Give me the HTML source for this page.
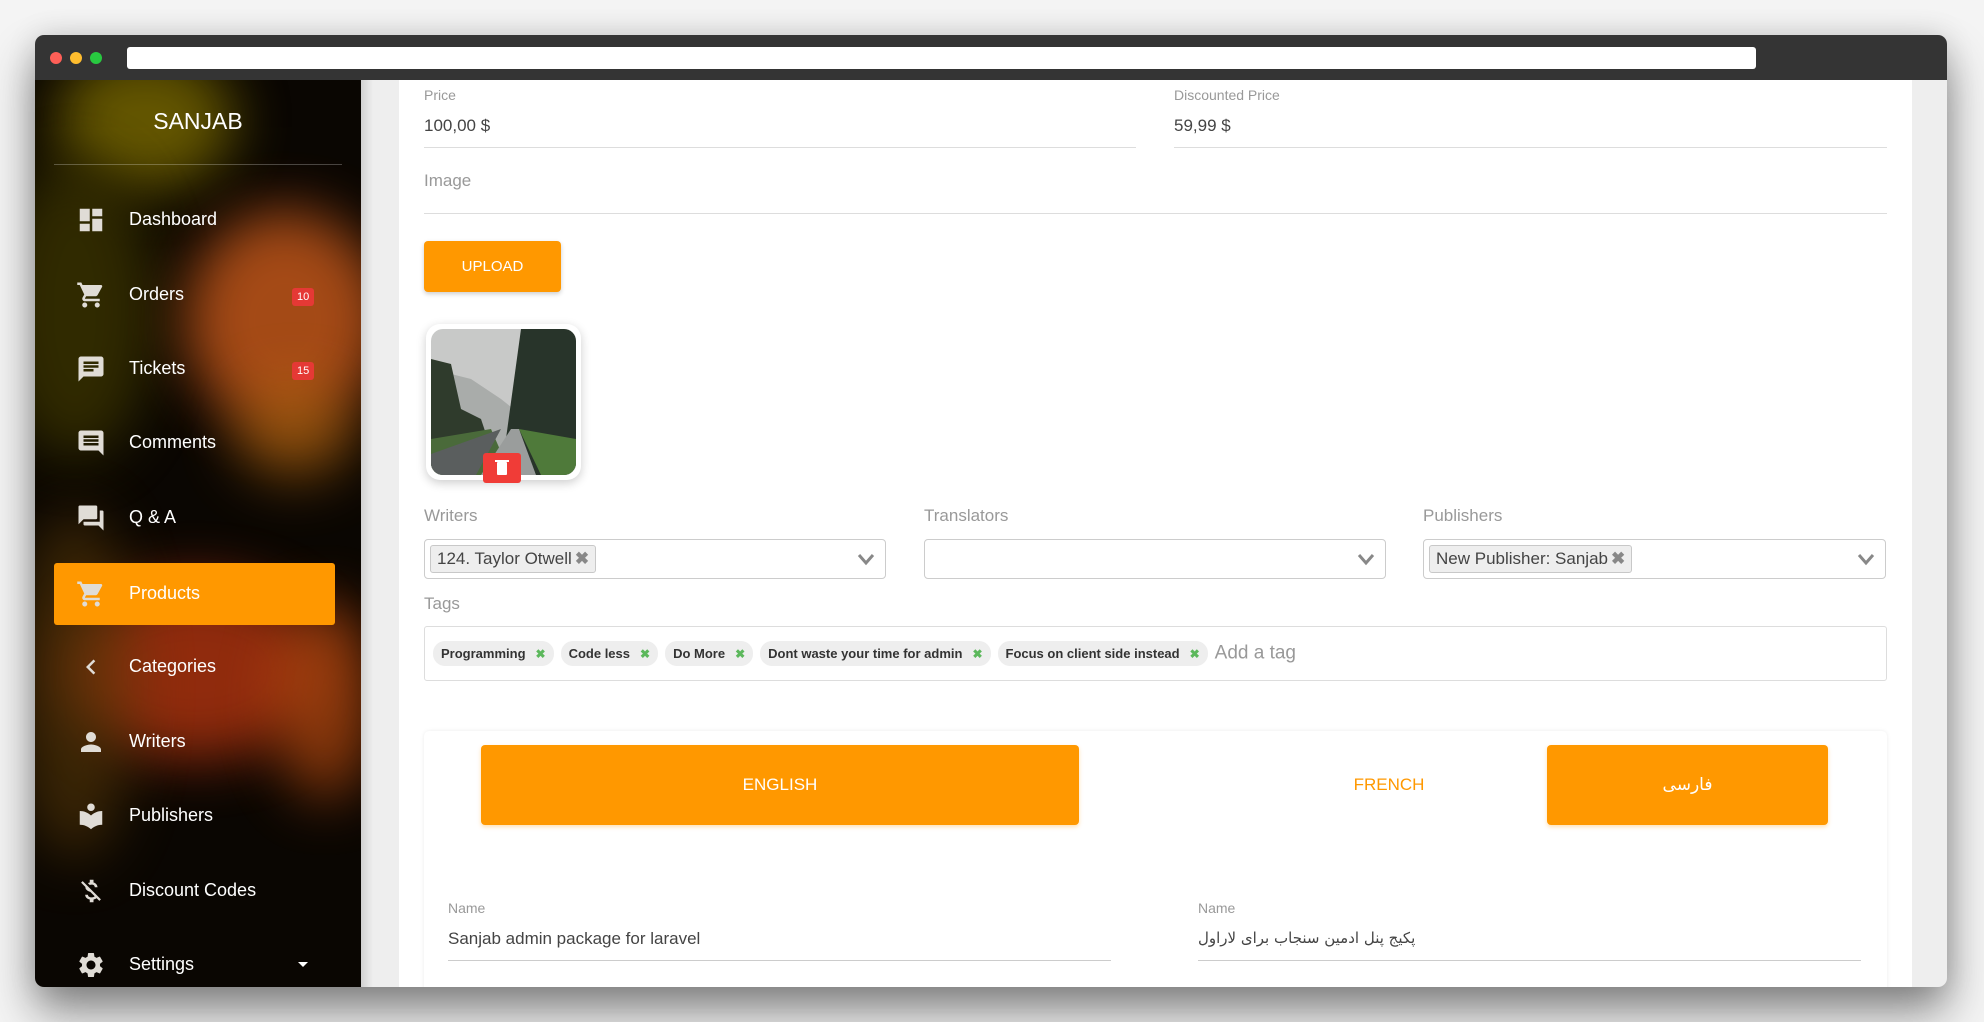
<!DOCTYPE html>
<html><head><meta charset="utf-8"><style>
*{box-sizing:border-box;margin:0;padding:0}
body{width:1984px;height:1022px;background:#f4f4f4;font-family:"Liberation Sans",Arial,sans-serif;position:relative;overflow:hidden}
.abs{position:absolute}
.win{left:35px;top:35px;width:1912px;height:952px;border-radius:9px;background:#eee;box-shadow:0 25px 45px rgba(0,0,0,.45),0 0 30px rgba(0,0,0,.12);overflow:hidden}
.tb{left:0;top:0;width:1912px;height:45px;background:#343434}
.dot{width:12px;height:12px;border-radius:50%;top:17px}
.addr{left:92px;top:12px;width:1629px;height:22px;background:#fff;border-radius:3px}
.side{left:0;top:45px;width:326px;height:907px;overflow:hidden;background:#0a0602}
.blob{border-radius:50%;filter:blur(28px)}
.mi{left:0;width:326px;height:60px;color:#fff;font-size:18px}
.mi svg{position:absolute;left:41px;top:15px;width:30px;height:30px;fill:#e0dcd6}
.mi span{position:absolute;left:94px;top:19px}
.badge{position:absolute;left:257px;top:23px;background:#e53935;color:#fff;font-size:11px;padding:2px 5px;border-radius:3px;line-height:14px}
.panel{left:364px;top:45px;width:1513px;height:907px;background:#fff}
.lbl{color:#999;font-size:15px}
.val{color:#444;font-size:17px}
.line{height:1px;background:#ddd}
.sel{height:40px;border:1px solid #ccc;border-radius:4px;background:#fff}
.chip{position:absolute;left:5px;top:5px;height:28px;background:#eee;border:1px solid #c8c8c8;border-radius:3px;font-size:17px;color:#444;padding:3px 6px;white-space:nowrap}
.chip b{color:#888;font-weight:bold;margin-left:3px}
.arr{position:absolute;right:10px;top:11px;width:18px;height:16px}
.tag{display:inline-block;background:#eee;border-radius:12px;font-size:13px;color:#333;padding:5px 8px;margin-right:7px;font-weight:bold;vertical-align:middle}
.tag i{color:#5cb85c;font-style:normal;margin-left:10px;font-size:12px}
.ob{background:#ff9800;border-radius:4px;color:#fff;text-align:center;box-shadow:0 2px 4px rgba(255,152,0,.3)}
</style></head><body>
<div class="abs win">
 <div class="abs tb">
  <div class="abs dot" style="left:15px;background:#ff5f57"></div>
  <div class="abs dot" style="left:35px;background:#ffbd2e"></div>
  <div class="abs dot" style="left:55px;background:#28c940"></div>
  <div class="abs addr"></div>
 </div>
 <div class="abs side">
  <div class="abs blob" style="left:20px;top:-30px;width:180px;height:140px;background:#7a6a00;opacity:.8"></div>
  <div class="abs blob" style="left:-40px;top:80px;width:160px;height:300px;background:#3a3300;opacity:.8"></div>
  <div class="abs blob" style="left:150px;top:130px;width:200px;height:220px;background:#c0561a;opacity:.85"></div>
  <div class="abs blob" style="left:200px;top:300px;width:120px;height:100px;background:#b86a10;opacity:.6"></div>
  <div class="abs blob" style="left:30px;top:500px;width:260px;height:180px;background:#a8320f;opacity:.85"></div>
  <div class="abs blob" style="left:240px;top:520px;width:100px;height:200px;background:#b84b10;opacity:.7"></div>
  <div class="abs blob" style="left:-20px;top:430px;width:120px;height:350px;background:#5a3a08;opacity:.6"></div>
  <div class="abs" style="left:0;top:28px;width:326px;text-align:center;color:#fff;font-size:23px">SANJAB</div>
  <div class="abs" style="left:19px;top:84px;width:288px;height:1px;background:rgba(255,255,255,.25)"></div>

  <div class="abs mi" style="top:110px"><svg viewBox="0 0 24 24"><path d="M3 13h8V3H3v10zm0 8h8v-6H3v6zm10 0h8V11h-8v10zm0-18v6h8V3h-8z"/></svg><span>Dashboard</span></div>
  <div class="abs mi" style="top:185px"><svg viewBox="0 0 24 24"><path d="M7 18c-1.1 0-1.99.9-1.99 2S5.9 22 7 22s2-.9 2-2-.9-2-2-2zM1 2v2h2l3.6 7.59-1.35 2.45c-.16.28-.25.61-.25.96 0 1.1.9 2 2 2h12v-2H7.42c-.14 0-.25-.11-.25-.25l.03-.12.9-1.630h7.45c.75 0 1.41-.41 1.75-1.03l3.58-6.49A1 1 0 0 0 20 4H5.21l-.94-2H1zm16 16c-1.1 0-1.99.9-1.99 2s.89 2 1.99 2 2-.9 2-2-.9-2-2-2z"/></svg><span>Orders</span><div class="badge">10</div></div>
  <div class="abs mi" style="top:259px"><svg viewBox="0 0 24 24"><path d="M20 2H4c-1.1 0-1.99.9-1.99 2L2 22l4-4h14c1.1 0 2-.9 2-2V4c0-1.1-.9-2-2-2zM6 9h12v2H6V9zm8 5H6v-2h8v2zm4-6H6V6h12v2z"/></svg><span>Tickets</span><div class="badge">15</div></div>
  <div class="abs mi" style="top:333px"><svg viewBox="0 0 24 24"><path d="M21.99 4c0-1.1-.89-2-1.99-2H4c-1.1 0-2 .9-2 2v12c0 1.1.9 2 2 2h14l4 4-.01-18zM18 14H6v-2h12v2zm0-3H6V9h12v2zm0-3H6V6h12v2z"/></svg><span>Comments</span></div>
  <div class="abs mi" style="top:408px"><svg viewBox="0 0 24 24"><path d="M21 6h-2v9H6v2c0 .55.45 1 1 1h11l4 4V7c0-.55-.45-1-1-1zm-4 6V3c0-.55-.45-1-1-1H3c-.55 0-1 .45-1 1v14l4-4h10c.55 0 1-.45 1-1z"/></svg><span>Q &amp; A</span></div>
  <div class="abs" style="left:19px;top:483px;width:281px;height:62px;background:#ff9800;border-radius:3px"></div>
  <div class="abs mi" style="top:484px"><svg viewBox="0 0 24 24"><path d="M7 18c-1.1 0-1.99.9-1.99 2S5.9 22 7 22s2-.9 2-2-.9-2-2-2zM1 2v2h2l3.6 7.59-1.35 2.45c-.16.28-.25.61-.25.96 0 1.1.9 2 2 2h12v-2H7.42c-.14 0-.25-.11-.25-.25l.03-.12.9-1.63h7.45c.75 0 1.41-.41 1.75-1.03l3.58-6.49A1 1 0 0 0 20 4H5.21l-.94-2H1zm16 16c-1.1 0-1.99.9-1.99 2s.89 2 1.99 2 2-.9 2-2-.9-2-2-2z"/></svg><span>Products</span></div>
  <div class="abs mi" style="top:557px"><svg viewBox="0 0 24 24"><path d="M15.41 7.41L14 6l-6 6 6 6 1.41-1.41L10.83 12z"/></svg><span>Categories</span></div>
  <div class="abs mi" style="top:632px"><svg viewBox="0 0 24 24"><path d="M12 12c2.21 0 4-1.79 4-4s-1.79-4-4-4-4 1.79-4 4 1.79 4 4 4zm0 2c-2.67 0-8 1.34-8 4v2h16v-2c0-2.66-5.33-4-8-4z"/></svg><span>Writers</span></div>
  <div class="abs mi" style="top:706px"><svg viewBox="0 0 24 24"><path d="M12 11.55C9.64 9.35 6.48 8 3 8v11c3.48 0 6.64 1.35 9 3.55 2.36-2.19 5.52-3.55 9-3.55V8c-3.48 0-6.64 1.35-9 3.55zM12 8c1.66 0 3-1.34 3-3s-1.34-3-3-3-3 1.34-3 3 1.34 3 3 3z"/></svg><span>Publishers</span></div>
  <div class="abs mi" style="top:781px"><svg viewBox="0 0 24 24"><path d="M12.5 6.9c1.78 0 2.44.85 2.5 2.1h2.21c-.07-1.72-1.12-3.3-3.21-3.81V3h-3v2.16c-.53.12-1.030.3-1.48.54l1.47 1.47c.41-.17.91-.27 1.51-.27zM5.33 4.06L4.06 5.33 7.5 8.77c0 2.08 1.56 3.21 3.91 3.91l3.51 3.51c-.34.48-1.05.91-2.42.91-2.06 0-2.87-.92-2.98-2.1h-2.2c.12 2.19 1.76 3.42 3.68 3.83V21h3v-2.15c.96-.18 1.82-.55 2.45-1.12l2.22 2.22 1.27-1.27L5.33 4.06z"/></svg><span>Discount Codes</span></div>
  <div class="abs mi" style="top:855px"><svg viewBox="0 0 24 24"><path d="M19.14 12.94c.04-.3.06-.61.06-.94 0-.32-.02-.64-.07-.94l2.03-1.58a.49.49 0 0 0 .12-.61l-1.92-3.32a.488.488 0 0 0-.59-.22l-2.39.96c-.5-.38-1.03-.7-1.62-.94l-.36-2.54a.484.484 0 0 0-.48-.41h-3.84c-.24 0-.43.17-.47.41l-.36 2.54c-.59.24-1.13.57-1.62.94l-2.39-.96c-.22-.08-.47 0-.59.22L2.74 8.87c-.12.21-.08.47.12.61l2.03 1.58c-.05.3-.09.63-.09.94s.02.64.07.94l-2.03 1.58a.49.49 0 0 0-.12.61l1.92 3.32c.12.22.37.29.59.22l2.39-.96c.5.38 1.03.7 1.62.94l.36 2.54c.05.24.24.41.48.41h3.84c.24 0 .44-.17.47-.41l.36-2.54c.59-.24 1.13-.56 1.62-.94l2.39.96c.22.08.47 0 .59-.22l1.92-3.32c.12-.22.07-.47-.12-.61l-2.01-1.58zM12 15.6c-1.98 0-3.6-1.62-3.6-3.6s1.62-3.6 3.6-3.6 3.6 1.62 3.6 3.6-1.62 3.6-3.6 3.6z"/></svg><span>Settings</span><div style="position:absolute;left:263px;top:27px;border-left:5px solid transparent;border-right:5px solid transparent;border-top:5px solid #fff"></div></div>
 </div>
 <div class="abs" style="left:326px;top:45px;width:12px;height:907px;background:linear-gradient(90deg,rgba(0,0,0,.12),rgba(0,0,0,0))"></div>

 <div class="abs panel">
  <div class="abs lbl" style="left:25px;top:7px;font-size:14px">Price</div>
  <div class="abs val" style="left:25px;top:36px">100,00 $</div>
  <div class="abs line" style="left:25px;top:67px;width:712px"></div>
  <div class="abs lbl" style="left:775px;top:7px;font-size:14px">Discounted Price</div>
  <div class="abs val" style="left:775px;top:36px">59,99 $</div>
  <div class="abs line" style="left:775px;top:67px;width:713px"></div>
  <div class="abs lbl" style="left:25px;top:91px;font-size:17px">Image</div>
  <div class="abs line" style="left:25px;top:133px;width:1463px"></div>
  <div class="abs ob" style="left:25px;top:161px;width:137px;height:51px;line-height:51px;font-size:15px;box-shadow:0 2px 5px rgba(0,0,0,.2)">UPLOAD</div>
  <div class="abs" style="left:27px;top:244px;width:155px;height:156px;border-radius:14px;background:#fff;box-shadow:0 3px 10px rgba(0,0,0,.2)"></div>
  <svg class="abs" style="left:32px;top:249px" width="145" height="146" viewBox="0 0 145 146"><defs><clipPath id="c"><rect width="145" height="146" rx="12"/></clipPath></defs><g clip-path="url(#c)"><rect width="145" height="146" fill="#c8c9c8"/><path d="M0 40 L40 50 L70 70 L95 90 L95 146 L0 146Z" fill="#a9acaa"/><path d="M0 30 L20 35 L30 80 L50 90 L60 120 L0 146Z" fill="#2f3b2c"/><path d="M70 146 L90 0 L145 0 L145 146Z" fill="#28342a"/><path d="M0 110 L60 100 L80 146 L0 146Z" fill="#4a6a3a"/><path d="M50 146 L80 100 L88 100 L105 146Z" fill="#9a9d9c"/><path d="M88 100 L110 146 L145 146 L145 110Z" fill="#4f7a3a"/><path d="M0 125 L70 100 L45 146 L0 146Z" fill="#5a5e5e"/></g></svg>
  <div class="abs" style="left:84px;top:373px;width:38px;height:30px;background:#f03c37;border-radius:3px"><div style="position:absolute;left:14px;top:9px;width:10px;height:13px;background:#fff;border-radius:1px"></div><div style="position:absolute;left:12px;top:7px;width:14px;height:2px;background:#fff"></div></div>

  <div class="abs lbl" style="left:25px;top:426px;font-size:17px">Writers</div>
  <div class="abs lbl" style="left:525px;top:426px;font-size:17px">Translators</div>
  <div class="abs lbl" style="left:1024px;top:426px;font-size:17px">Publishers</div>
  <div class="abs sel" style="left:25px;top:459px;width:462px"><div class="chip">124. Taylor Otwell<b>✖</b></div><svg class="arr" viewBox="0 0 18 16"><path d="M2 4l7 8 7-8" stroke="#888" stroke-width="3" fill="none"/></svg></div>
  <div class="abs sel" style="left:525px;top:459px;width:462px"><svg class="arr" viewBox="0 0 18 16"><path d="M2 4l7 8 7-8" stroke="#888" stroke-width="3" fill="none"/></svg></div>
  <div class="abs sel" style="left:1024px;top:459px;width:463px"><div class="chip">New Publisher: Sanjab<b>✖</b></div><svg class="arr" viewBox="0 0 18 16"><path d="M2 4l7 8 7-8" stroke="#888" stroke-width="3" fill="none"/></svg></div>
  <div class="abs lbl" style="left:25px;top:514px;font-size:17px">Tags</div>
  <div class="abs" style="left:25px;top:546px;width:1463px;height:55px;border:1px solid #ddd;border-radius:3px;padding:14px 0 0 8px;white-space:nowrap">
   <span class="tag">Programming<i>✖</i></span><span class="tag">Code less<i>✖</i></span><span class="tag">Do More<i>✖</i></span><span class="tag">Dont waste your time for admin<i>✖</i></span><span class="tag">Focus on client side instead<i>✖</i></span><span style="font-size:19px;color:#999;vertical-align:middle">Add a tag</span>
  </div>

  <div class="abs" style="left:25px;top:651px;width:1463px;height:270px;background:#fff;border-radius:5px;box-shadow:0 0 4px rgba(0,0,0,.08)">
   <div class="abs ob" style="left:57px;top:14px;width:598px;height:80px;line-height:80px;font-size:17px">ENGLISH</div>
   <div class="abs" style="left:840px;top:14px;width:250px;height:80px;line-height:80px;text-align:center;color:#ff9800;font-size:17px">FRENCH</div>
   <div class="abs ob" style="left:1123px;top:14px;width:281px;height:80px;line-height:80px;font-size:17px;font-family:'Liberation Sans','DejaVu Sans',sans-serif">فارسی</div>
   <div class="abs lbl" style="left:24px;top:169px;font-size:14px">Name</div>
   <div class="abs val" style="left:24px;top:198px">Sanjab admin package for laravel</div>
   <div class="abs line" style="left:24px;top:229px;width:663px;background:#ccc"></div>
   <div class="abs lbl" style="left:774px;top:169px;font-size:14px">Name</div>
   <div class="abs val" style="left:774px;top:198px;font-family:'DejaVu Sans',sans-serif;font-size:15px" dir="rtl">پکیج پنل ادمین سنجاب برای لاراول</div>
   <div class="abs line" style="left:774px;top:229px;width:663px;background:#ccc"></div>
  </div>
 </div>
</div>
</body></html>
